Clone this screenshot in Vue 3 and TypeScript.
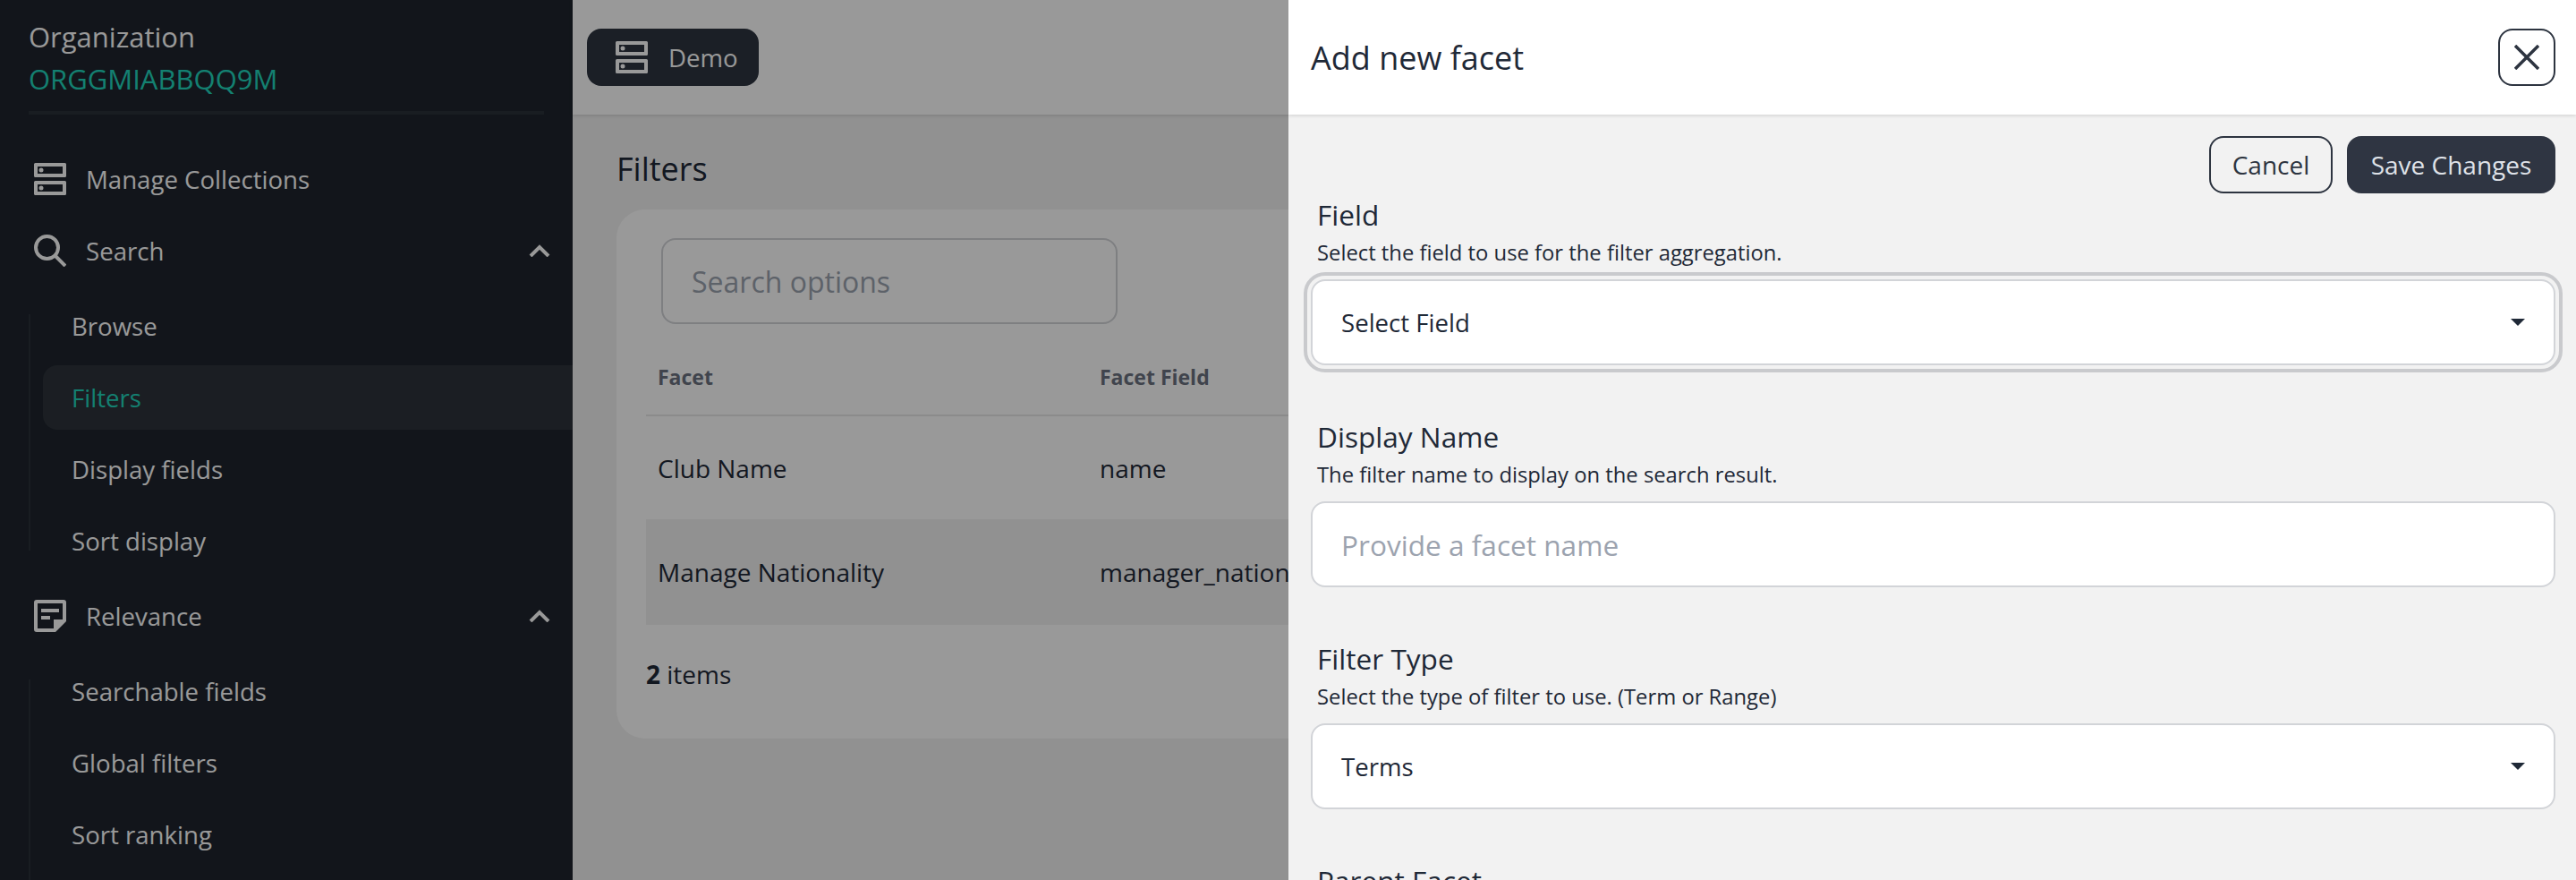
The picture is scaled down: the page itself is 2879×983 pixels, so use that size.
<template>
  <div class="app">
    <aside class="sidebar">
      <div class="org">
        <div class="org-label">Organization</div>
        <div class="org-id">ORGGMIABBQQ9M</div>
      </div>
      <nav class="nav">
        <template v-for="group in nav" :key="group.label">
          <div class="nav-row">
            <svg v-if="group.icon === 'server'" class="nav-icon" viewBox="0 0 36 36">
              <path fill="currentColor" fill-rule="evenodd" :d="serverPath" />
              <circle fill="currentColor" cx="8" cy="8" r="2.500" />
              <circle fill="currentColor" cx="8" cy="28" r="2.500" />
            </svg>
            <svg v-else-if="group.icon === 'search'" class="nav-icon" viewBox="0 0 36 36" fill="none" stroke="currentColor" stroke-width="4">
              <circle cx="14.500" cy="14.500" r="12.500" />
              <path d="M23.500 23.500 35 35" />
            </svg>
            <svg v-else-if="group.icon === 'note'" class="nav-icon" viewBox="0 0 36 36">
              <path fill="currentColor" fill-rule="evenodd" d="M3 0h30a3 3 0 0 1 3 3v21L24 36H3a3 3 0 0 1-3-3V3a3 3 0 0 1 3-3zM4 4v28h18V22h10V4zM8 10h20v4H8zM8 18h10v4H8z" />
            </svg>
            <span class="nav-text">{{ group.label }}</span>
            <svg v-if="group.items" class="chevron" viewBox="0 0 24 14" fill="none" stroke="currentColor" stroke-width="4">
              <path d="M2 13 12 3l10 10" />
            </svg>
          </div>
          <div v-if="group.items" class="sub" :class="{ open: group.label === 'Relevance' }">
            <div v-for="item in group.items" :key="item" class="sub-row" :class="{ active: item === 'Filters' }">
              {{ item }}
            </div>
          </div>
        </template>
      </nav>
    </aside>

    <main class="main">
      <header class="topbar">
        <button class="demo-btn">
          <svg class="demo-icon" viewBox="0 0 36 36">
            <path fill="currentColor" fill-rule="evenodd" :d="serverPath" />
            <circle fill="currentColor" cx="8" cy="8" r="2.500" />
            <circle fill="currentColor" cx="8" cy="28" r="2.500" />
          </svg>
          Demo
        </button>
      </header>
      <div class="content">
        <h1 class="page-title">Filters</h1>
        <section class="card">
          <input class="search" placeholder="Search options" />
          <table class="table">
            <thead>
              <tr>
                <th>Facet</th>
                <th>Facet Field</th>
                <th></th>
              </tr>
            </thead>
            <tbody>
              <tr v-for="row in rows" :key="row.field">
                <td class="facet">{{ row.facet }}</td>
                <td>{{ row.field }}</td>
                <td></td>
              </tr>
            </tbody>
          </table>
          <div class="count"><b>2</b> items</div>
        </section>
      </div>
    </main>

    <div class="overlay"></div>

    <aside class="drawer">
      <header class="drawer-head">
        <h2 class="drawer-title">Add new facet</h2>
        <button class="close-btn" aria-label="Close">
          <svg viewBox="0 0 28 28" fill="none" stroke="currentColor" stroke-width="3.500">
            <path d="M1 1l26 26M27 1 1 27" />
          </svg>
        </button>
      </header>
      <div class="drawer-body">
        <div class="actions">
          <button class="btn-outline">Cancel</button>
          <button class="btn-solid">Save Changes</button>
        </div>
        <div v-for="f in fields" :key="f.label" class="field">
          <label class="field-label">{{ f.label }}</label>
          <p v-if="f.help" class="field-help">{{ f.help }}</p>
          <div v-if="f.type === 'select'" class="select" :class="{ focused: f.focused }">
            <span>{{ f.value }}</span>
            <svg class="caret" viewBox="0 0 16 8"><path fill="currentColor" d="M0 0h16L8 8z" /></svg>
          </div>
          <input v-else-if="f.type === 'input'" class="text-input" :placeholder="f.value" />
        </div>
      </div>
    </aside>
  </div>
</template>

<script setup lang="ts">
type NavGroup = {
  label: string;
  icon: string;
  items?: string[];
};

type Field = {
  label: string;
  help?: string;
  type?: 'select' | 'input';
  value?: string;
  focused?: boolean;
};

const serverPath =
  'M1.500 0h33A1.500 1.500 0 0 1 36 1.500v13a1.500 1.500 0 0 1-1.500 1.500h-33A1.500 1.500 0 0 1 0 14.500v-13A1.500 1.500 0 0 1 1.500 0zM4 4v8h28V4zM1.500 20h33a1.500 1.500 0 0 1 1.500 1.500v13a1.500 1.500 0 0 1-1.500 1.500h-33A1.500 1.500 0 0 1 0 34.500v-13A1.500 1.500 0 0 1 1.500 20zM4 24v8h28v-8z';

const nav: NavGroup[] = [
  { label: 'Manage Collections', icon: 'server' },
  { label: 'Search', icon: 'search', items: ['Browse', 'Filters', 'Display fields', 'Sort display'] },
  { label: 'Relevance', icon: 'note', items: ['Searchable fields', 'Global filters', 'Sort ranking'] },
];

const rows = [
  { facet: 'Club Name', field: 'name' },
  { facet: 'Manage Nationality', field: 'manager_nationality' },
];

const fields: Field[] = [
  { label: 'Field', help: 'Select the field to use for the filter aggregation.', type: 'select', value: 'Select Field', focused: true },
  { label: 'Display Name', help: 'The filter name to display on the search result.', type: 'input', value: 'Provide a facet name' },
  { label: 'Filter Type', help: 'Select the type of filter to use. (Term or Range)', type: 'select', value: 'Terms' },
  { label: 'Parent Facet' },
];
</script>

<style>
html,
body {
  margin: 0;
  height: 100%;
  overflow: hidden;
}
</style>

<style scoped>
.app {
  position: relative;
  display: flex;
  width: 2879px;
  height: 983px;
  overflow: hidden;
  font-family: "Open Sans", "Noto Sans", sans-serif;
  color: #1f2937;
  background: #f2f2f2;
}

.sidebar {
  flex: 0 0 640px;
  background: #1e242d;
  color: #fff;
  overflow: hidden;
}

.org {
  margin: 0 32px;
  padding: 18px 0 12px;
  border-bottom: 4px solid #2b313a;
  font-size: 31px;
  line-height: 47px;
}

.org-id {
  color: #22d6bd;
}

.nav {
  display: flex;
  flex-direction: column;
  gap: 8px;
  padding-top: 36px;
}

.nav-row {
  display: flex;
  align-items: center;
  height: 72px;
  padding: 0 25px 0 38px;
  font-size: 27.6px;
}

.nav-icon {
  width: 36px;
  height: 36px;
  flex: none;
  margin-right: 22px;
}

.nav-text {
  flex: 1;
}

.chevron {
  width: 24px;
  height: 14px;
}

.sub {
  position: relative;
  display: flex;
  flex-direction: column;
  gap: 8px;
  margin: 4px 0;
  padding-left: 48px;
}

.sub::before {
  content: "";
  position: absolute;
  left: 32px;
  top: 23px;
  bottom: 25px;
  border-left: 2px solid #2b313a;
}

.sub.open::before {
  bottom: -40px;
}

.sub-row {
  display: flex;
  align-items: center;
  height: 72px;
  padding-left: 32px;
  font-size: 27.6px;
  border-radius: 16px 0 0 16px;
}

.sub-row.active {
  background: #2d333b;
  color: #22d6bd;
}

.main {
  flex: 1;
  min-width: 0;
}

.topbar {
  display: flex;
  align-items: center;
  height: 128px;
  padding-left: 16px;
  background: #fff;
  box-shadow: 0 1px 4px rgba(0, 0, 0, 0.15);
}

.demo-btn {
  display: flex;
  align-items: center;
  gap: 23px;
  box-sizing: border-box;
  width: 192px;
  height: 64px;
  padding: 0 0 0 32px;
  border: 0;
  border-radius: 16px;
  background: #2d3440;
  color: #fff;
  font: inherit;
  font-size: 27.600px;
}

.demo-icon {
  width: 36px;
  height: 36px;
}

.content {
  padding: 0 32px 0 49px;
}

.page-title {
  margin: 0;
  padding-top: 37px;
  height: 106px;
  box-sizing: border-box;
  font-size: 36px;
  line-height: 48px;
  font-weight: 500;
}

.card {
  box-sizing: border-box;
  height: 591px;
  width: 2100px;
  padding: 32px 33px;
  border-radius: 32px;
  background: #fff;
}

.search {
  display: block;
  box-sizing: border-box;
  width: 510px;
  height: 96px;
  margin-left: 17px;
  padding: 0 32px;
  border: 2px solid #d2d4d8;
  border-radius: 16px;
  background: #fff;
  font: inherit;
  font-size: 32px;
}

.search::placeholder,
.text-input::placeholder {
  color: #9ca3af;
}

.table {
  width: 100%;
  margin-top: 16px;
  border-collapse: collapse;
  table-layout: fixed;
}

.table th {
  height: 85px;
  padding: 0 13px;
  border-bottom: 2px solid #e8e8e8;
  text-align: left;
  font-size: 23px;
  font-weight: 700;
  color: #6b7280;
}

.table th:first-child {
  width: 468px;
}

.table th:nth-child(2) {
  width: 560px;
}

.table td {
  height: 115px;
  padding: 0 13px;
  font-size: 28px;
}

.table tr:nth-child(2) td {
  height: 118px;
  background: #f2f2f2;
}

.facet {
  font-weight: 500;
}

.count {
  margin-top: 34px;
  font-size: 28px;
  line-height: 42px;
}

.overlay {
  position: absolute;
  inset: 0;
  background: rgba(0, 0, 0, 0.4);
}

.drawer {
  position: absolute;
  top: 0;
  right: 0;
  bottom: 0;
  width: 1439px;
  background: #f2f2f2;
  overflow: hidden;
}

.drawer-head {
  display: flex;
  align-items: center;
  justify-content: space-between;
  height: 128px;
  padding: 0 23px 0 25px;
  background: #fff;
  box-shadow: 0 1px 4px rgba(0, 0, 0, 0.15);
}

.drawer-title {
  margin: 0;
  font-size: 36px;
  font-weight: 500;
}

.close-btn {
  display: flex;
  align-items: center;
  justify-content: center;
  box-sizing: border-box;
  width: 64px;
  height: 64px;
  padding: 0;
  border: 2px solid #2d3440;
  border-radius: 16px;
  background: transparent;
  color: #2d3440;
}

.close-btn svg {
  width: 28px;
  height: 28px;
}

.drawer-body {
  padding: 24px 23px 0 25px;
}

.actions {
  display: flex;
  justify-content: flex-end;
  gap: 16px;
}

.btn-outline,
.btn-solid {
  box-sizing: border-box;
  height: 64px;
  border-radius: 16px;
  font: inherit;
  font-size: 28px;
  font-weight: 500;
}

.btn-outline {
  width: 138px;
  border: 2px solid #2d3440;
  background: transparent;
  color: #2d3440;
}

.btn-solid {
  width: 233px;
  border: 0;
  background: #2f3542;
  color: #dfe2e8;
}

.field {
  margin-bottom: 56px;
}

.field-label {
  display: block;
  padding-left: 7px;
  font-size: 31.600px;
  line-height: 48px;
  font-weight: 500;
}

.field-help {
  margin: 0 0 12px;
  padding-left: 7px;
  font-size: 23.800px;
  line-height: 36px;
}

.select,
.text-input {
  display: flex;
  align-items: center;
  justify-content: space-between;
  box-sizing: border-box;
  width: 100%;
  height: 96px;
  padding: 0 32px;
  border: 2px solid #d2d4d8;
  border-radius: 16px;
  background: #fff;
  font: inherit;
  font-size: 27.600px;
  color: #1f2937;
}

.text-input {
  font-size: 31.600px;
}

.select.focused {
  outline: 4px solid #c9cacd;
  outline-offset: 4px;
}

.caret {
  width: 16px;
  height: 8px;
  margin-right: 0;
}
</style>
